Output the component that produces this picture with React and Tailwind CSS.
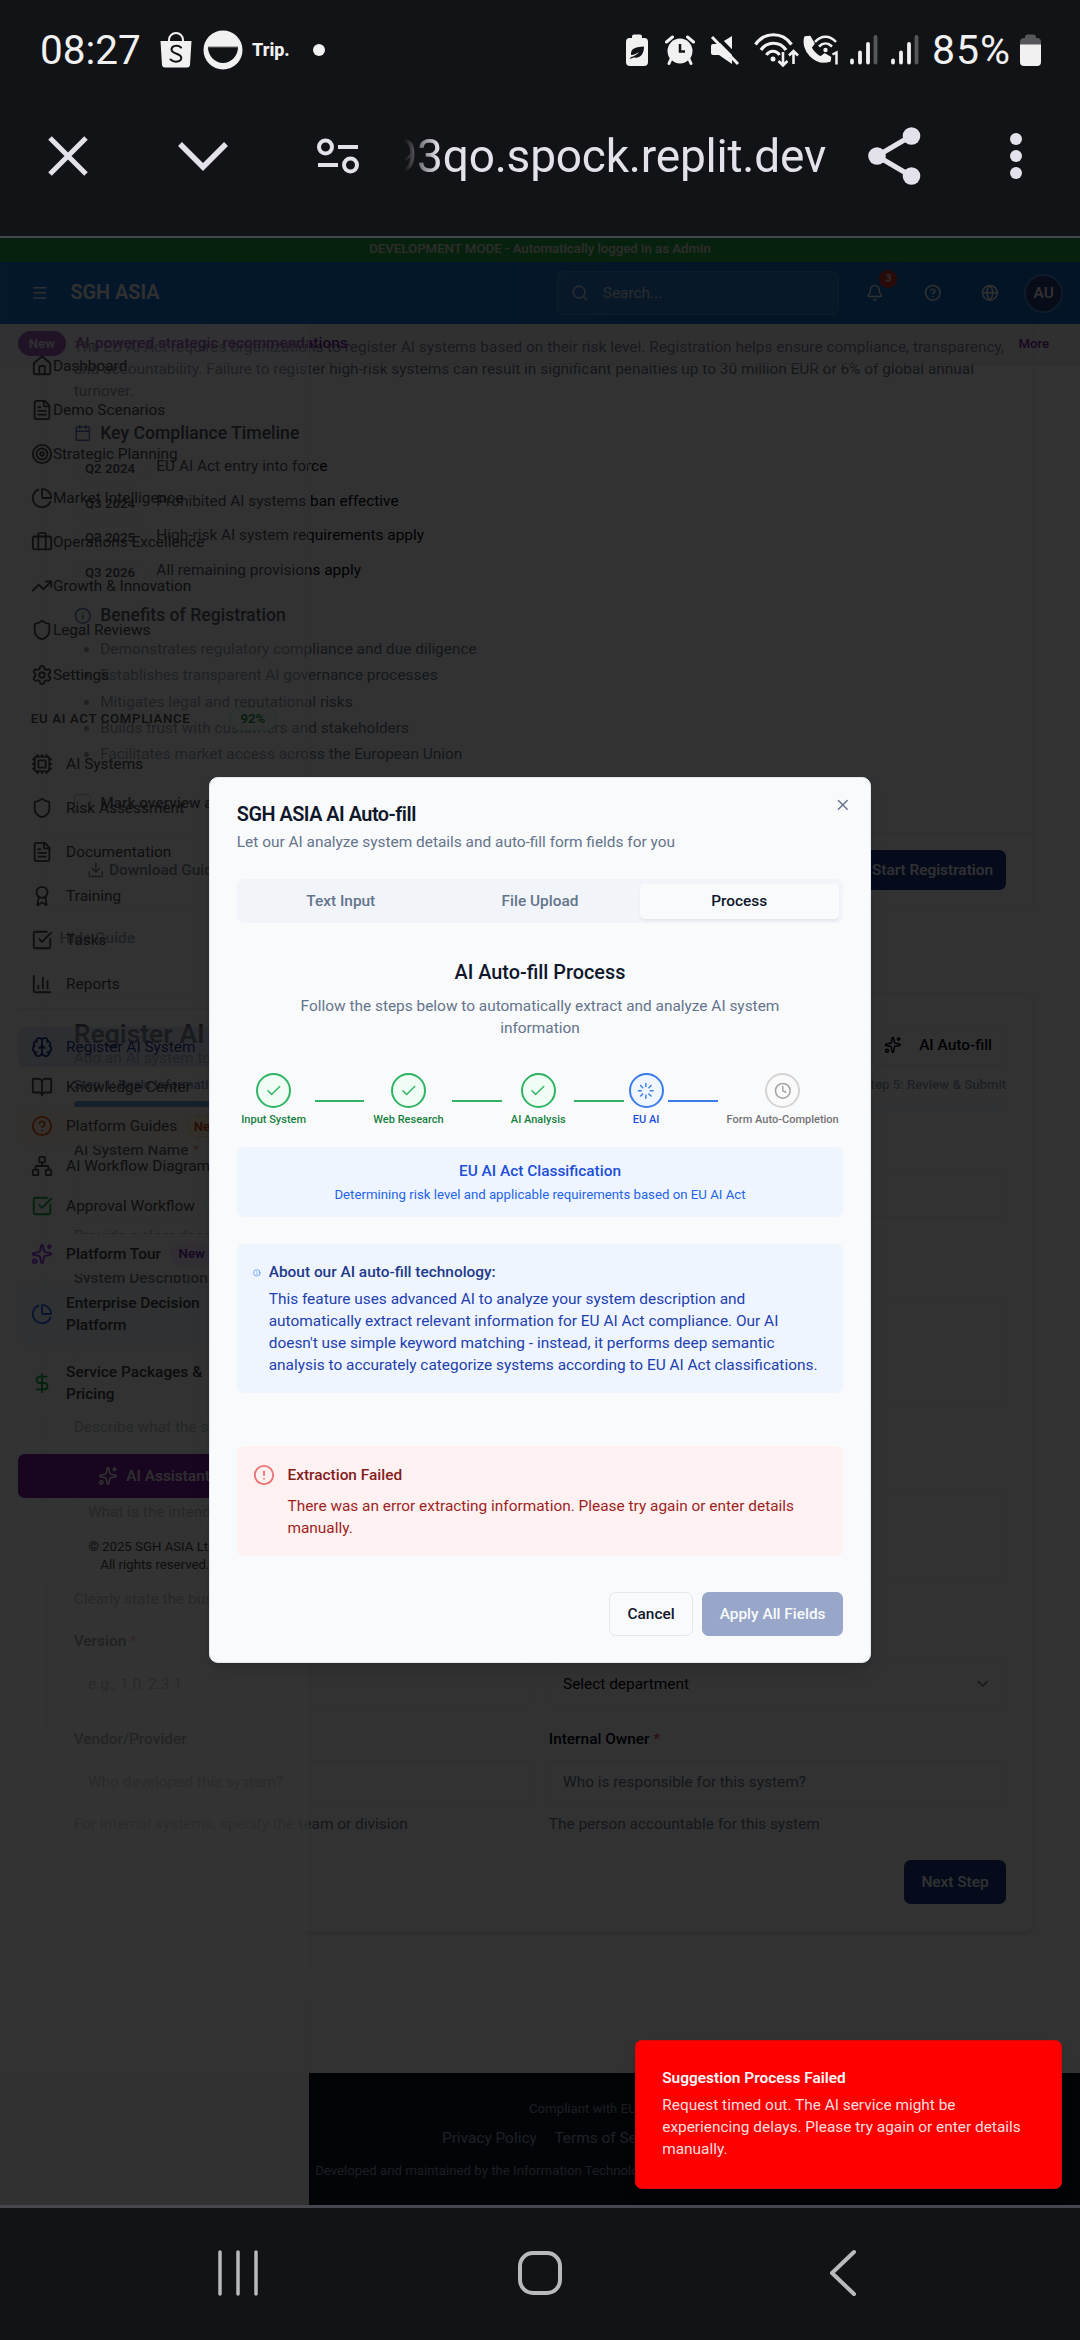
import React from "react";
import {
  Home, FileText, Target, PieChart, Briefcase, TrendingUp, Shield, Settings, Cpu, Award,
  CheckSquare, BarChart3, Brain, BookOpen, HelpCircle, Network, Sparkles, DollarSign, Calendar,
  Info, Download, Menu, Search, Bell, Globe, X, Check, Loader, Clock, AlertCircle, ChevronDown,
} from "lucide-react";

function StatusBar() {
  return (
    <div className="flex h-[100px] items-center justify-between pl-[40px] pr-[39px] text-[#f1f1f1]">
      <div className="flex items-center">
        <span className="w-[120px] whitespace-nowrap text-[40.5px] leading-none">08:27</span>
        <svg width="32" height="36" viewBox="0 0 32 36" className="shrink-0">
          <path d="M9 10V8a7 7 0 0 1 14 0v2" fill="none" stroke="#f1f1f1" strokeWidth="2" />
          <path d="M0.5 9h31l-1.5 24a3 3 0 0 1-3 2.500H5a3 3 0 0 1-3-2.500z" fill="#f1f1f1" />
          <path d="M21 15.500c-3-3-9.500-2-9.500 2 0 5 10 3.500 9.800 8.500-.3 4-7 5-10.800 1.500" fill="none" stroke="#121317" strokeWidth="2" strokeLinecap="round" />
        </svg>
        <svg width="40" height="40" viewBox="0 0 40 40" className="ml-[11px] shrink-0">
          <circle cx="20" cy="20" r="19.500" fill="#f1f1f1" />
          <path d="M5 17h30a15 16 0 0 1-30 0z" fill="#121317" />
          <path d="M5 17h30" stroke="#777" strokeWidth="1" />
        </svg>
        <span className="ml-[9px] w-[61px] text-[18px] font-extrabold leading-none">Trip.</span>
        <span className="h-3 w-3 rounded-full bg-[#f1f1f1]" />
      </div>
      <div className="flex items-center">
        <svg width="22" height="33" viewBox="0 0 22 33">
          <path d="M6 4V2.500Q6 .5 8 .5h6q2 0 2 2V4h2.500Q22 4 22 8v20q0 4-4 4H4q-4 0-4-4V8q0-4 3.500-4z" fill="#f1f1f1" />
          <path d="M5 21c-1-7 6-8 13-8.500 0 7-3 12-10 11l-4.500 1.500 1.500-2c4-1 6-2.500 8-5-3 2-5 3-8 3z" fill="#121317" />
        </svg>
        <svg width="30" height="30" viewBox="0 0 30 30" className="ml-[17px]">
          <path d="M1.500 7l6-5M28.500 7l-6-5" stroke="#f1f1f1" strokeWidth="3" strokeLinecap="round" />
          <path d="M6 24l-2 4.500M24 24l2 4.500" stroke="#f1f1f1" strokeWidth="3" strokeLinecap="round" />
          <circle cx="15" cy="16" r="12.500" fill="#f1f1f1" />
          <path d="M15 9v7.500h5" fill="none" stroke="#121317" strokeWidth="2.500" />
        </svg>
        <svg width="31" height="31" viewBox="0 0 31 31" className="ml-[15px]">
          <path d="M1 11q0-2 2-2h6L22 1v28L9 20H3q-2 0-2-2z" fill="#f1f1f1" />
          <path d="M5 0l26 26" stroke="#121317" strokeWidth="4" />
          <path d="M2 2l26 27" stroke="#f1f1f1" strokeWidth="3" />
        </svg>
        <svg width="45" height="36" viewBox="0 0 45 36" className="ml-[13px]">
          <g fill="none" stroke="#f1f1f1" strokeWidth="3.200">
            <path d="M1.500 12.500c9-13 27-13 36 0M7 18c6-9 19-9 25 0M12.500 23c3-5 10-5 13 0" />
            <path d="M29 20v13M24.500 29l4.500 4.500 4.500-4.500M39.500 32V19M35 23.500l4.500-4.500 4.500 4.500" strokeWidth="2.600" />
          </g>
          <circle cx="19" cy="27" r="2.500" fill="#f1f1f1" />
        </svg>
        <svg width="36" height="30" viewBox="0 0 36 30" className="ml-[4px]">
          <path d="M2 2l5-.5 4 7-3 4q3 6 9.500 9.500l4-3 6 3.500-.5 3.500C12 31-2 15 2 2z" fill="#f1f1f1" stroke="#f1f1f1" strokeWidth="1.500" strokeLinejoin="round" />
          <g fill="none" stroke="#f1f1f1" strokeWidth="2.500">
            <path d="M12 7c6-7 15-7 21 0M16 11.500c4-4 9-4 13 0" />
          </g>
          <circle cx="22.500" cy="15" r="2.200" fill="#f1f1f1" />
          <path d="M29.500 19.500l4-2v12" fill="none" stroke="#f1f1f1" strokeWidth="2.500" />
        </svg>
        {[0, 1].map((i) => (
          <svg key={i} width="28" height="32" viewBox="0 0 28 32" className={i ? "ml-[13px]" : "ml-[11px]"}>
            <g strokeWidth="3.800" strokeLinecap="round" stroke="#f1f1f1">
              <path d="M2 26.500v2M10 18.500v10M18 10v18.500" />
              <path d="M25.500 3v25.500" stroke="#56575a" />
            </g>
          </svg>
        ))}
        <span className="ml-[13px] w-[88px] whitespace-nowrap text-[41px] leading-none tracking-[1px]">85%</span>
        <svg width="21" height="33" viewBox="0 0 21 33">
          <path d="M5 4V3Q5 .5 8 .5h5q3 0 3 2.500v1h1q4 0 4 4v3H0V8q0-4 4-4z" fill="#56575a" />
          <path d="M0 10.500h21V28q0 4-4 4H4q-4 0-4-4z" fill="#f1f1f1" />
        </svg>
      </div>
    </div>
  );
}

function BrowserBar() {
  const c = "#e3e1e9";
  return (
    <div className="flex h-[136px] items-start pl-[46px] text-[#e3e1e9]">
      <svg width="44" height="44" viewBox="0 0 44 44" className="mt-[34px]">
        <path d="M4 4l36 36M40 4L4 40" stroke={c} strokeWidth="5" />
      </svg>
      <svg width="54" height="34" viewBox="0 0 54 34" className="ml-[86px] mt-[39px]">
        <path d="M4 5l23 23L50 5" fill="none" stroke={c} strokeWidth="5.500" />
      </svg>
      <svg width="44" height="38" viewBox="0 0 44 38" className="ml-[86px] mt-[37px]">
        <g fill="none" stroke={c} strokeWidth="4">
          <circle cx="9.500" cy="10" r="6.500" />
          <circle cx="34.500" cy="28" r="6.500" />
          <path d="M22 10h20M2 28h20" />
        </g>
      </svg>
      <div className="ml-[44px] mt-[28px] flex h-[60px] w-[422px] justify-end overflow-hidden whitespace-nowrap text-[46px] leading-[57px] tracking-[-0.2px] [mask-image:linear-gradient(to_right,transparent,black_34px)]">
        <span>93qo.spock.replit.dev</span>
      </div>
      <svg width="54" height="60" viewBox="0 0 54 60" className="ml-[41px] mt-[26px]">
        <path d="M44 10L10 30l34 20" fill="none" stroke={c} strokeWidth="5" />
        <circle cx="44.500" cy="10" r="8.800" fill={c} />
        <circle cx="10" cy="30" r="8.800" fill={c} />
        <circle cx="44.500" cy="50" r="8.800" fill={c} />
      </svg>
      <div className="ml-[89px] mt-[33px] flex flex-col gap-[5px]">
        <span className="h-3 w-3 rounded-full bg-[#e3e1e9]" />
        <span className="h-3 w-3 rounded-full bg-[#e3e1e9]" />
        <span className="h-3 w-3 rounded-full bg-[#e3e1e9]" />
      </div>
    </div>
  );
}

const timeline = [
  ["Q2 2024", "EU AI Act entry into force"],
  ["Q3 2024", "Prohibited AI systems ban effective"],
  ["Q3 2025", "High-risk AI system requirements apply"],
  ["Q3 2026", "All remaining provisions apply"],
];
const benefits = [
  "Demonstrates regulatory compliance and due diligence",
  "Establishes transparent AI governance processes",
  "Mitigates legal and reputational risks",
  "Builds trust with customers and stakeholders",
  "Facilitates market access across the European Union",
];

function Label({ children, required, className = "" }) {
  return (
    <div className={"text-sm font-medium text-slate-950 " + className}>
      {children}
      {required && <span className="text-[#d9534f]"> *</span>}
    </div>
  );
}

function MainContent() {
  return (
    <div className="flex flex-col">
      <div className="mx-[42px] h-[611px] rounded-b-lg border border-t-0 border-slate-200 pt-[91px]">
        <p className="mx-6 h-[60px] text-sm text-[#64748b]">
          The EU AI Act requires organizations to register AI systems based on their risk level. Registration helps ensure compliance, transparency,<br />
          and accountability. Failure to register high-risk systems can result in significant penalties up to 30 million EUR or 6% of global annual<br />
          turnover.
        </p>
        <div className="mx-6 mt-4 flex items-center gap-2 font-medium text-slate-950">
          <Calendar size={16} className="text-[#1e3a8a]" />
          Key Compliance Timeline
        </div>
        <div className="mx-6 mt-2 text-sm text-slate-950">
          {timeline.map(([q, t]) => (
            <div key={q} className="flex h-[31.4px] items-start">
              <span className="mt-[1.4px] flex h-[22px] w-[66px] items-center justify-center rounded-full border border-slate-200 text-xs font-semibold">{q}</span>
              <span className="ml-[9px]">{t}</span>
            </div>
          ))}
        </div>
        <div className="mx-6 mt-2 flex items-center gap-2 font-medium text-slate-950">
          <Info size={16} className="text-[#1e3a8a]" />
          Benefits of Registration
        </div>
        <ul className="mx-6 mt-2 flex list-disc flex-col gap-1 pl-6 text-sm text-[#64748b]">
          {benefits.map((b) => <li key={b}>{b}</li>)}
        </ul>
        <div className="mx-6 mt-6 flex items-center gap-2 text-sm font-medium text-slate-950">
          <span className="h-4 w-4 rounded-sm border border-slate-400" />
          Mark overview as read
        </div>
        <div className="mt-4 flex h-[69px] items-center justify-between border-t border-slate-200 px-6 text-sm font-medium">
          <span className="flex items-center gap-1 pl-3 text-slate-700"><Download size={16} />Download Guide</span>
          <span className="flex h-9 items-center rounded-md bg-[#1e3a8a] px-3 text-slate-100">Start Registration</span>
        </div>
      </div>
      <div className="ml-[54px] mt-4 text-sm font-medium text-[#64748b]">Hide Guide</div>
      <div className="mx-[42px] mt-10 rounded-lg border border-slate-200 p-6 shadow-sm">
        <div className="flex h-[44px] items-start justify-between">
          <div>
            <div className="text-2xl font-semibold leading-none text-slate-950">Register AI System</div>
            <div className="text-sm text-[#64748b]">Add an AI system to the registry</div>
          </div>
          <span className="mt-1 flex h-9 items-center gap-4 rounded-md border border-slate-200 px-3 text-sm font-medium text-slate-950"><Sparkles size={16} />AI Auto-fill</span>
        </div>
        <div className="mt-[6px] flex justify-between text-xs font-medium">
          <span className="text-[#1e3a8a]">Step 1: Basic Information</span>
          <span className="text-slate-400">Step 5: Review &amp; Submit</span>
        </div>
        <div className="mt-[7px] h-2 rounded-full bg-slate-100"><div className="h-[6px] w-1/5 rounded-full bg-[#1565c0]" /></div>
        <Label required className="mt-[27px]">AI System Name</Label>
        <div className="mt-[10px] h-10 rounded-md border border-slate-200" />
        <div className="mt-2 text-sm text-[#64748b]">Provide a clear descriptive name</div>
        <Label required className="mt-[18px]">System Description</Label>
        <div className="mt-[10px] h-24 rounded-md border border-slate-200" />
        <div className="mt-[9px] text-sm text-[#64748b]">Describe what the system does</div>
        <Label required className="mt-[21px]">Purpose</Label>
        <div className="mt-[7px] h-20 rounded-md border border-slate-200 px-3 py-2 text-sm text-[#64748b]">What is the intended use?</div>
        <div className="mt-2 text-sm text-[#64748b]">Clearly state the business purpose</div>
        <div className="mt-[18px] grid grid-cols-2 gap-x-4 text-sm">
          <div>
            <Label required>Version</Label>
            <div className="mt-[9px] flex h-10 items-center rounded-md border border-slate-200 px-3 text-[#64748b]">e.g., 1.0, 2.3.1</div>
            <Label className="mt-5">Vendor/Provider</Label>
            <div className="mt-[9px] flex h-10 items-center rounded-md border border-slate-200 px-3 text-[#64748b]">Who developed this system?</div>
            <div className="mt-2 text-[#64748b]">For internal systems, specify the team or division</div>
          </div>
          <div>
            <Label required>Department</Label>
            <div className="mt-[9px] flex h-10 items-center justify-between rounded-md border border-slate-200 px-3 text-slate-950">Select department<ChevronDown size={16} className="text-[#64748b]" /></div>
            <Label required className="mt-5">Internal Owner</Label>
            <div className="mt-[9px] flex h-10 items-center rounded-md border border-slate-200 px-3 text-[#64748b]">Who is responsible for this system?</div>
            <div className="mt-2 text-[#64748b]">The person accountable for this system</div>
          </div>
        </div>
        <div className="mt-[23px] flex justify-end">
          <span className="flex h-10 items-center rounded-md bg-[#1e3a8a] px-4 text-sm font-medium text-slate-100">Next Step</span>
        </div>
      </div>
      <div className="mt-[128px] flex h-[130px] flex-col bg-[#0f172a] pt-[25px] text-xs text-[#8a94a6]">
        <div className="flex"><span className="ml-[149px] w-[331px] text-lg font-semibold leading-4 text-white">SGH ASIA</span>Compliant with EU AI Act</div>
        <div className="ml-[401px] mt-2 flex gap-4 text-sm text-slate-400"><span>Privacy Policy</span><span>Terms of Service</span></div>
        <div className="ml-[286px] mt-3">Developed and maintained by the Information Technology Department</div>
      </div>
    </div>
  );
}

const navTop = [
  [Home, "Dashboard"], [FileText, "Demo Scenarios"], [Target, "Strategic Planning"], [PieChart, "Market Intelligence"],
  [Briefcase, "Operations Excellence"], [TrendingUp, "Growth & Innovation"], [Shield, "Legal Reviews"], [Settings, "Settings"],
];
const navEu = [
  [Cpu, "AI Systems"], [Shield, "Risk Assessment"], [FileText, "Documentation"], [Award, "Training"], [CheckSquare, "Tasks"], [BarChart3, "Reports"],
];

function Row({ icon: Icon, iconClass = "", className = "", children }) {
  return (
    <div className={"flex shrink-0 items-center gap-3 rounded-md px-3 " + className}>
      <Icon size={20} className={"shrink-0 " + iconClass} />
      {children}
    </div>
  );
}

function Sidebar() {
  return (
    <aside className="absolute bottom-0 left-0 top-[80px] flex w-[280px] flex-col border-r border-[#eceef0] bg-[linear-gradient(to_bottom,rgba(240,246,255,0.3)_0%,rgba(246,250,250,0.42)_45%,rgba(248,254,250,0.7)_76%,rgba(250,252,250,0.87)_88%,rgba(250,250,250,0.985)_92%)] px-4 pt-[18px] text-sm text-[#4a4a4c]">
      {navTop.map(([Icon, t]) => (
        <div key={t} className="flex h-10 shrink-0 items-center pl-3"><Icon size={20} />{t}</div>
      ))}
      <div className="flex h-[41px] shrink-0 items-center pl-3 text-xs font-medium tracking-wider">
        <span className="w-[180px] whitespace-nowrap">EU AI ACT COMPLIANCE</span>
        <span className="flex h-[22px] w-[43px] items-center justify-center rounded-full border border-green-200 bg-[#f0fdf4]/90 font-semibold tracking-normal text-[#1b8a3f]">92%</span>
      </div>
      {navEu.map(([Icon, t]) => (
        <div key={t} className="flex h-10 shrink-0 items-center gap-3 pl-3"><Icon size={20} />{t}</div>
      ))}
      <div className="mt-[2px] h-px shrink-0 bg-slate-200" />
      <Row icon={Brain} className="mt-4 h-9 bg-[#b9c0e6]/35 text-[#1e3a8a]">Register AI System</Row>
      <Row icon={BookOpen} className="h-9">Knowledge Center</Row>
      <Row icon={HelpCircle} iconClass="text-[#ea580c]" className="h-9 bg-[#faf5ee]/90">Platform Guides
        <span className="-ml-1 rounded-full border border-orange-200 bg-orange-100 px-1.5 py-px text-xs font-semibold text-[#c2410c]">New</span>
      </Row>
      <Row icon={Network} className="h-9">AI Workflow Diagrams</Row>
      <Row icon={CheckSquare} iconClass="text-[#16a34a]" className="h-9">Approval Workflow
        <span className="-ml-1 rounded-full border border-green-200 bg-green-50 px-2 py-px text-xs text-green-700">New</span>
      </Row>
      <Row icon={Sparkles} iconClass="text-[#9333ea]" className="mt-2 h-9 bg-[#faf9fc] font-medium text-[#404040]">Platform Tour
        <span className="-ml-1 rounded-full bg-purple-100 px-2 py-[3px] text-xs text-[#6b21a8]">New</span>
      </Row>
      <Row icon={PieChart} iconClass="text-[#2563eb]" className="mt-2 h-14 bg-[#eff3fa] font-medium text-[#404040]"><span>Enterprise Decision<br />Platform</span></Row>
      <Row icon={DollarSign} iconClass="text-[#16a34a]" className="mt-[7px] h-14 bg-[#fafdfa]/40 font-medium text-[#404040]"><span>Service Packages &amp;<br />Pricing</span></Row>
      <div className="mt-9 flex h-10 shrink-0 items-center justify-center gap-2 rounded-md bg-[#7b1fa2] font-medium text-[#e8e8e8]"><Sparkles size={18} />AI Assistant</div>
      <div className="mt-[26px] flex shrink-0 flex-col items-center pt-[11px] text-xs">
        <span>© 2025 SGH ASIA Ltd.</span>
        <span className="ml-[2px]">All rights reserved.</span>
      </div>
    </aside>
  );
}

function TopBars() {
  return (
    <div className="absolute left-0 right-0 top-0">
      <div className="flex h-6 items-center justify-center bg-[#22a94c] text-xs font-medium text-[#e4ddd8]">DEVELOPMENT MODE - Automatically logged in as Admin</div>
      <div className="flex h-14 items-center bg-gradient-to-r from-[#1976d2] to-[#1565c0] pl-7 pr-[17px] text-[#f0f0f0]">
        <Menu size={16} />
        <span className="ml-5 text-lg font-semibold">SGH ASIA</span>
        <div className="ml-auto flex h-10 w-[256px] items-center rounded-md border border-white/15 bg-white/10 pl-3 text-sm text-slate-300"><Search size={16} /><span className="ml-[13px]">Search...</span></div>
        <div className="relative ml-[25px]"><Bell size={16} /><span className="absolute -right-3 top-[-13px] flex h-4 w-4 items-center justify-center rounded-full bg-[#c8382c] text-[10px] font-medium">3</span></div>
        <HelpCircle size={16} className="ml-9" />
        <Globe size={16} className="ml-9" />
        <span className="ml-[25px] flex h-8 w-8 items-center justify-center rounded-full bg-[#2b3a78] text-sm font-semibold ring-2 ring-white/20">AU</span>
      </div>
      <div className="flex h-[37px] items-center border-b border-[#eddcf0] bg-[#d9b8dc]/20 px-4 pb-px text-xs font-medium text-[#7b1fa2]">
        <span className="flex h-[22px] w-11 items-center justify-center rounded-full bg-[#7b1fa2] font-semibold text-[#e8e8e8]">New</span>
        <span className="ml-2 flex-1 text-sm">AI-powered strategic recommendations</span>
        <span className="mr-3">More</span>
      </div>
    </div>
  );
}

const steps = [
  ["Input System", "done"], ["Web Research", "done"], ["AI Analysis", "done"], ["EU AI", "active"], ["Form Auto-Completion", "todo"],
];
const tone = {
  done: ["border-[#2fb463] bg-[#f0fdf4] text-[#2fb463]", "text-[#15803d]", "bg-[#2fb463]"],
  active: ["border-[#3b7de8] bg-[#eff6ff] text-[#3b7de8]", "text-[#1d4ed8]", "bg-[#3b7de8]"],
  todo: ["border-[#d4d4d4] bg-[#fafafa] text-[#a3a3a3]", "text-[#737373]", "bg-gray-300"],
};
const stepIcon = { done: Check, active: Loader, todo: Clock };

function Modal() {
  return (
    <div className="absolute left-[190px] top-[491px] flex h-[804px] w-[600px] flex-col rounded-lg border border-slate-200 bg-[#f9fafc] p-6 text-sm shadow-lg">
      <X size={16} className="absolute right-4 top-4 text-[#64748b]" />
      <div className="text-lg font-semibold leading-[18px] tracking-tight text-[#0f172a]">SGH ASIA AI Auto-fill</div>
      <div className="mt-1.5 text-[#64748b]">Let our AI analyze system details and auto-fill form fields for you</div>
      <div className="mt-6 grid h-10 grid-cols-3 rounded-md bg-[#f1f4f9] p-1 font-medium text-[#64748b]">
        <span className="flex items-center justify-center">Text Input</span>
        <span className="flex items-center justify-center">File Upload</span>
        <span className="flex items-center justify-center rounded-sm bg-[#f9fafc] text-[#0f172a] shadow-[0_1px_2px_rgba(0,0,0,0.05)]">Process</span>
      </div>
      <div className="mt-[32px] text-center text-lg font-medium text-[#0f172a]">AI Auto-fill Process</div>
      <div className="mx-auto mt-[5px] max-w-md text-center text-[#64748b]">Follow the steps below to automatically extract and analyze AI system information</div>
      <div className="mt-[31px] flex h-[51px] items-center">
        {steps.map(([label, s], i) => {
          const Icon = stepIcon[s];
          return (
            <React.Fragment key={label}>
              <div className="flex flex-col items-center">
                <div className={"flex h-8 w-8 items-center justify-center rounded-full border-2 " + tone[s][0]}><Icon size={16} /></div>
                <div className={"mt-1 whitespace-nowrap px-1 text-[10px] font-medium leading-[15px] " + tone[s][1]}>{label}</div>
              </div>
              {i < 4 && <div className={"mx-1 h-0.5 flex-1 " + tone[s][2]} />}
            </React.Fragment>
          );
        })}
      </div>
      <div className="mt-4 rounded-md bg-[#eef5fe] p-3 text-center">
        <div className="font-medium text-[#1d4ed8]">EU AI Act Classification</div>
        <div className="mt-1 text-xs text-[#2563eb]">Determining risk level and applicable requirements based on EU AI Act</div>
      </div>
      <div className="mt-6 flex rounded-md bg-[#eef5fe] py-4 pl-[15px] text-[#1e40af]">
        <Info size={7} className="mt-[7px] shrink-0 text-[#3b82f6]" />
        <div className="ml-[7px] whitespace-nowrap">
          <div className="font-medium text-[#1e3a8a]">About our AI auto-fill technology:</div>
          <p className="mt-1">
            This feature uses advanced AI to analyze your system description and<br />
            automatically extract relevant information for EU AI Act compliance. Our AI<br />
            doesn't use simple keyword matching - instead, it performs deep semantic<br />
            analysis to accurately categorize systems according to EU AI Act classifications.
          </p>
        </div>
      </div>
      <div className="mt-12 flex rounded-md bg-[#fef1f1] py-4 pl-[15px]">
        <AlertCircle size={20} className="shrink-0 text-[#ee7272]" />
        <div className="ml-[11px]">
          <div className="font-medium text-[#851c1c]">Extraction Failed</div>
          <p className="mt-2 text-[#9f1f1f]">There was an error extracting information. Please try again or enter details<br />manually.</p>
        </div>
      </div>
      <div className="mt-8 flex justify-end gap-2 font-medium">
        <span className="flex h-10 items-center rounded-md border border-slate-200 px-4 text-[#0f172a]">Cancel</span>
        <span className="flex h-10 items-center rounded-md bg-[#97a6c9] px-4 text-slate-50">Apply All Fields</span>
      </div>
    </div>
  );
}

function Toast() {
  return (
    <div className="absolute right-4 top-[1637px] h-[135px] w-[388px] rounded-md border border-[#d90808] bg-[#ff0000] p-6 text-sm text-slate-50 shadow-lg">
      <div className="font-semibold">Suggestion Process Failed</div>
      <div className="mt-1 text-slate-50/90">Request timed out. The AI service might be<br />experiencing delays. Please try again or enter details<br />manually.</div>
    </div>
  );
}

function NavBar() {
  return (
    <div className="flex flex-1 items-start pl-[216px] pt-[40px]">
      <svg width="44" height="50" viewBox="0 0 44 50"><path d="M4 4v42M22 4v42M40 4v42" stroke="#b9babc" strokeWidth="3.500" strokeLinecap="round" /></svg>
      <svg width="50" height="50" viewBox="0 0 50 50" className="ml-[255px]"><rect x="5" y="5" width="40" height="40" rx="13" fill="none" stroke="#b9babc" strokeWidth="4" /></svg>
      <svg width="30" height="50" viewBox="0 0 30 50" className="ml-[263px]"><path d="M26 4L4 25l22 21" fill="none" stroke="#b9babc" strokeWidth="4" strokeLinecap="round" strokeLinejoin="round" /></svg>
    </div>
  );
}

export default function App() {
  return (
    <div className="flex h-[2340px] w-[1080px] flex-col overflow-hidden bg-[#121317] font-['Roboto',sans-serif]">
      <StatusBar />
      <BrowserBar />
      <div className="h-[1972px] overflow-hidden border-b-[3px] border-[#46464f]">
        <div className="relative h-[1790px] w-[980px] overflow-hidden bg-[#fafafa] [zoom:1.10204]">
          <MainContent />
          <TopBars />
          <Sidebar />
          <div className="absolute inset-0 border-t-[2px] border-[#46464f] bg-black/80" />
          <Modal />
          <Toast />
        </div>
      </div>
      <NavBar />
    </div>
  );
}
